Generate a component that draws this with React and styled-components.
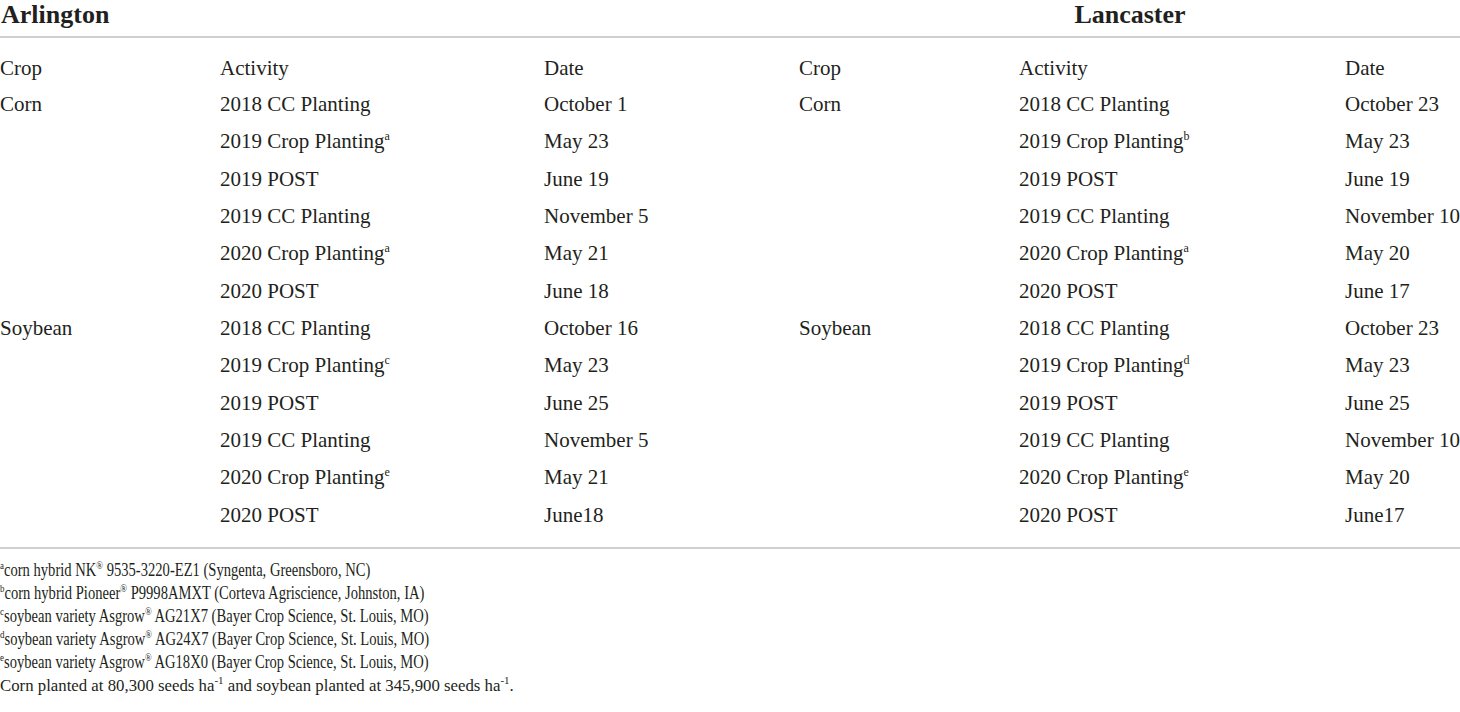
import React from "react";
import styled, { createGlobalStyle } from "styled-components";

const Global = createGlobalStyle`
  html, body { margin: 0; padding: 0; background: #fff; }
  body { font-family: "Liberation Serif", "Times New Roman", serif; color: #231f20; }
`;

const Page = styled.div`
  width: 1460px;
  height: 712px;
  overflow: hidden;
`;

const TitleRow = styled.div`
  display: grid;
  grid-template-columns: 799px 661px;
  height: 36px;
  align-items: start;
  border-bottom: 2px solid #d0d0d0;
`;

const Site = styled.div`
  font-weight: bold;
  font-size: 26px;
  line-height: 29px;
  padding-left: 1px;
  text-align: ${(p) => (p.$center ? "center" : "left")};
`;

const Table = styled.div`
  display: grid;
  grid-template-columns: 220px 324px 255px 220px 326px 115px;
  padding-top: 12px;
  padding-bottom: 13px;
  border-bottom: 2px solid #d0d0d0;
`;

const Cell = styled.div`
  font-size: 21px;
  height: ${(p) => (p.$head ? "36px" : "37.35px")};
  line-height: ${(p) => (p.$head ? "36px" : "37.35px")};
  white-space: nowrap;
`;

const Sup = styled.sup`
  font-size: 12px;
  vertical-align: 8px;
  line-height: 0;
`;

const Notes = styled.div`
  padding-top: 10px;
  display: flex;
  flex-direction: column;
`;

const Note = styled.div`
  font-size: ${(p) => (p.$narrow ? "18px" : "16.8px")};
  line-height: 23px;
  white-space: nowrap;
  transform-origin: left center;
  transform: ${(p) => (p.$narrow ? "scaleX(0.81)" : "none")};
`;

const NoteSup = styled.sup`
  font-size: 11px;
  vertical-align: 7px;
  line-height: 0;
`;

const left = [
  ["Corn", "2018 CC Planting", "", "October 1"],
  ["", "2019 Crop Planting", "a", "May 23"],
  ["", "2019 POST", "", "June 19"],
  ["", "2019 CC Planting", "", "November 5"],
  ["", "2020 Crop Planting", "a", "May 21"],
  ["", "2020 POST", "", "June 18"],
  ["Soybean", "2018 CC Planting", "", "October 16"],
  ["", "2019 Crop Planting", "c", "May 23"],
  ["", "2019 POST", "", "June 25"],
  ["", "2019 CC Planting", "", "November 5"],
  ["", "2020 Crop Planting", "e", "May 21"],
  ["", "2020 POST", "", "June18"],
];

const right = [
  ["Corn", "2018 CC Planting", "", "October 23"],
  ["", "2019 Crop Planting", "b", "May 23"],
  ["", "2019 POST", "", "June 19"],
  ["", "2019 CC Planting", "", "November 10"],
  ["", "2020 Crop Planting", "a", "May 20"],
  ["", "2020 POST", "", "June 17"],
  ["Soybean", "2018 CC Planting", "", "October 23"],
  ["", "2019 Crop Planting", "d", "May 23"],
  ["", "2019 POST", "", "June 25"],
  ["", "2019 CC Planting", "", "November 10"],
  ["", "2020 Crop Planting", "e", "May 20"],
  ["", "2020 POST", "", "June17"],
];

const notes = [
  ["a", "corn hybrid NK", " 9535-3220-EZ1 (Syngenta, Greensboro, NC)"],
  ["b", "corn hybrid Pioneer", " P9998AMXT (Corteva Agriscience, Johnston, IA)"],
  ["c", "soybean variety Asgrow", " AG21X7 (Bayer Crop Science, St. Louis, MO)"],
  ["d", "soybean variety Asgrow", " AG24X7 (Bayer Crop Science, St. Louis, MO)"],
  ["e", "soybean variety Asgrow", " AG18X0 (Bayer Crop Science, St. Louis, MO)"],
];

function Half({ row }) {
  const [crop, act, sup, date] = row;
  return (
    <>
      <Cell>{crop}</Cell>
      <Cell>
        {act}
        {sup && <Sup>{sup}</Sup>}
      </Cell>
      <Cell>{date}</Cell>
    </>
  );
}

export default function App() {
  return (
    <Page>
      <Global />
      <TitleRow>
        <Site>Arlington</Site>
        <Site $center>Lancaster</Site>
      </TitleRow>
      <Table>
        {["Crop", "Activity", "Date", "Crop", "Activity", "Date"].map((h, i) => (
          <Cell $head key={i}>
            {h}
          </Cell>
        ))}
        {left.map((r, i) => (
          <React.Fragment key={i}>
            <Half row={r} />
            <Half row={right[i]} />
          </React.Fragment>
        ))}
      </Table>
      <Notes>
        {notes.map(([s, a, b]) => (
          <Note $narrow key={s}>
            <NoteSup>{s}</NoteSup>
            {a}
            <NoteSup>®</NoteSup>
            {b}
          </Note>
        ))}
        <Note>
          Corn planted at 80,300 seeds ha<NoteSup>-1</NoteSup> and soybean planted at 345,900 seeds ha
          <NoteSup>-1</NoteSup>.
        </Note>
      </Notes>
    </Page>
  );
}
